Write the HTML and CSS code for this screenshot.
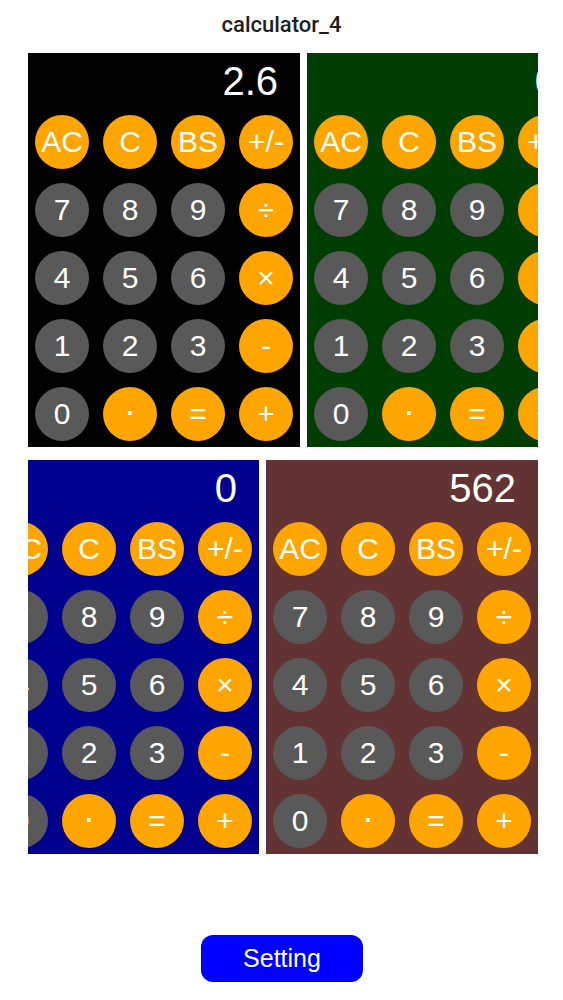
FILE: index.html
```html
<!DOCTYPE html>
<html>
<head>
<meta charset="utf-8">
<title>calculator_4</title>
<link rel="stylesheet" href="styles.css">
</head>
<body>
<div class="title">calculator_4</div>
<div class="board">
  <div class="row">
    <div class="panel black">
      <div class="display">2.6</div>
      <div class="keys">
        <div class="key op">AC</div><div class="key op">C</div><div class="key op">BS</div><div class="key op">+/-</div>
        <div class="key num">7</div><div class="key num">8</div><div class="key num">9</div><div class="key op sym">÷</div>
        <div class="key num">4</div><div class="key num">5</div><div class="key num">6</div><div class="key op sym">×</div>
        <div class="key num">1</div><div class="key num">2</div><div class="key num">3</div><div class="key op sym">-</div>
        <div class="key num">0</div><div class="key op dot">·</div><div class="key op sym">=</div><div class="key op sym">+</div>
      </div>
    </div>
    <div class="panel green">
      <div class="display">0</div>
      <div class="keys">
        <div class="key op">AC</div><div class="key op">C</div><div class="key op">BS</div><div class="key op">+/-</div>
        <div class="key num">7</div><div class="key num">8</div><div class="key num">9</div><div class="key op sym">÷</div>
        <div class="key num">4</div><div class="key num">5</div><div class="key num">6</div><div class="key op sym">×</div>
        <div class="key num">1</div><div class="key num">2</div><div class="key num">3</div><div class="key op sym">-</div>
        <div class="key num">0</div><div class="key op dot">·</div><div class="key op sym">=</div><div class="key op sym">+</div>
      </div>
    </div>
  </div>
  <div class="row shifted">
    <div class="panel blue">
      <div class="display">0</div>
      <div class="keys">
        <div class="key op">AC</div><div class="key op">C</div><div class="key op">BS</div><div class="key op">+/-</div>
        <div class="key num">7</div><div class="key num">8</div><div class="key num">9</div><div class="key op sym">÷</div>
        <div class="key num">4</div><div class="key num">5</div><div class="key num">6</div><div class="key op sym">×</div>
        <div class="key num">1</div><div class="key num">2</div><div class="key num">3</div><div class="key op sym">-</div>
        <div class="key num">0</div><div class="key op dot">·</div><div class="key op sym">=</div><div class="key op sym">+</div>
      </div>
    </div>
    <div class="panel brown">
      <div class="display">562</div>
      <div class="keys">
        <div class="key op">AC</div><div class="key op">C</div><div class="key op">BS</div><div class="key op">+/-</div>
        <div class="key num">7</div><div class="key num">8</div><div class="key num">9</div><div class="key op sym">÷</div>
        <div class="key num">4</div><div class="key num">5</div><div class="key num">6</div><div class="key op sym">×</div>
        <div class="key num">1</div><div class="key num">2</div><div class="key num">3</div><div class="key op sym">-</div>
        <div class="key num">0</div><div class="key op dot">·</div><div class="key op sym">=</div><div class="key op sym">+</div>
      </div>
    </div>
  </div>
</div>
<div class="footer">
  <div class="setting">Setting</div>
</div>
</body>
</html>
```

FILE: styles.css
```css
html, body {
  margin: 0;
  padding: 0;
  background: #ffffff;
}
body {
  width: 563px;
  font-family: "Liberation Sans", Arial, sans-serif;
}
.title {
  height: 53px;
  line-height: 50px;
  text-align: center;
  font-family: Roboto, "Liberation Sans", sans-serif;
  font-size: 22px;
  font-weight: 500;
  color: #1e1e1e;
}
.board {
  margin-left: 28px;
  width: 510px;
  overflow: hidden;
  display: flex;
  flex-direction: column;
  gap: 13px;
}
.row {
  display: flex;
  gap: 7px;
}
.row.shifted {
  margin-left: -41px;
}
.panel {
  width: 272px;
  height: 394px;
  flex-shrink: 0;
  box-sizing: border-box;
}
.black { background: #000000; }
.green { background: #003d00; }
.blue { background: #00008f; }
.brown { background: #633232; }
.display {
  height: 62px;
  box-sizing: border-box;
  padding-top: 8px;
  padding-right: 22px;
  text-align: right;
  font-size: 40px;
  line-height: 40px;
  color: #ffffff;
  white-space: nowrap;
}
.keys {
  display: grid;
  grid-template-columns: repeat(4, 54px);
  grid-auto-rows: 54px;
  gap: 14px;
  padding: 0 7px 6px 7px;
}
.key {
  width: 54px;
  height: 54px;
  border-radius: 50%;
  display: flex;
  align-items: center;
  justify-content: center;
  color: #ffffff;
  font-size: 30px;
  line-height: 1;
}
.key.dot {
  font-size: 36px;
  padding-bottom: 6px;
  box-sizing: border-box;
}
.op { background: #ffa500; }
.num { background: #595959; }
.footer {
  margin-top: 81px;
  display: flex;
  justify-content: center;
}
.setting {
  width: 162px;
  height: 47px;
  margin-left: 1px;
  border-radius: 12px;
  background: #0000ff;
  color: #ffffff;
  font-size: 25px;
  display: flex;
  align-items: center;
  justify-content: center;
}
```
